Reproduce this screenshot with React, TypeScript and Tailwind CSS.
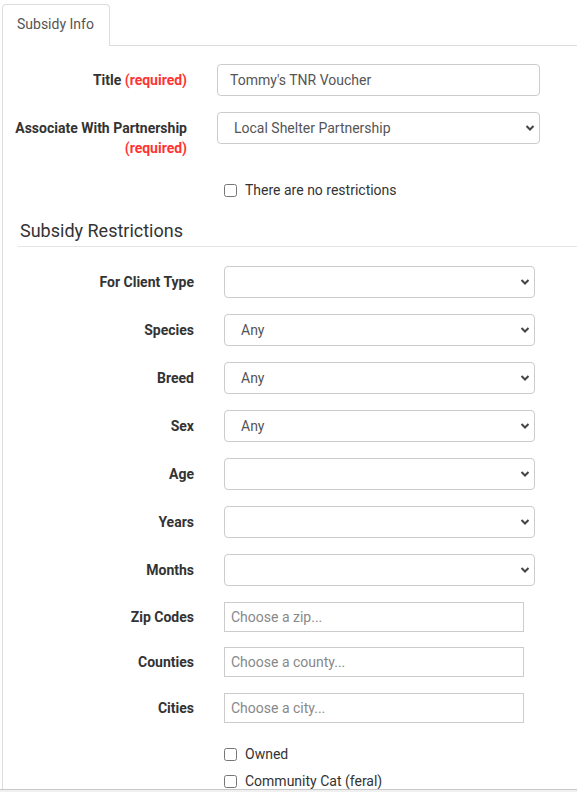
import React from "react";

const FONT = { fontFamily: "Roboto, 'Liberation Sans', sans-serif" };

function Chevron() {
  return (
    <svg width="10" height="7" viewBox="0 0 10 7" className="pointer-events-none absolute right-[5px] top-1/2 -translate-y-1/2">
      <path d="M1.5 1.5l3.5 3.5 3.5-3.5" fill="none" stroke="#444" strokeWidth="2" />
    </svg>
  );
}

function Select({ value, className }: { value?: string; className?: string }) {
  return (
    <div className={`relative h-8 ${className ?? ""}`}>
      <select
        defaultValue={value ?? ""}
        className="h-8 w-full appearance-none rounded border border-[#ccc] bg-white pl-4 pr-6 text-sm text-[#555] outline-none"
      >
        <option value="">{""}</option>
        {value && <option value={value}>{value}</option>}
      </select>
      <Chevron />
    </div>
  );
}

const RESTRICTIONS: { label: string; value?: string }[] = [
  { label: "For Client Type" },
  { label: "Species", value: "Any" },
  { label: "Breed", value: "Any" },
  { label: "Sex", value: "Any" },
  { label: "Age" },
  { label: "Years" },
  { label: "Months" },
];

const CHOSEN = [
  { label: "Zip Codes", placeholder: "Choose a zip...", gap: "mt-4" },
  { label: "Counties", placeholder: "Choose a county...", gap: "mt-[15px]" },
  { label: "Cities", placeholder: "Choose a city...", gap: "mt-4" },
];

function Check({ label, className }: { label: string; className?: string }) {
  return (
    <label className={`flex h-5 items-center pl-[221px] ${className ?? ""}`}>
      <input type="checkbox" className="m-0 h-[13px] w-[13px]" />
      <span className="ml-2 text-sm text-[#333]">{label}</span>
    </label>
  );
}

export default function App() {
  return (
    <div className="h-[792px] w-[577px] overflow-hidden bg-white" style={FONT}>
      <div className="h-[789px] overflow-hidden pl-[2px]">
        {/* tabs */}
        <div className="flex pt-1">
          <div className="h-[42px] w-[108px] rounded-t border border-b-0 border-[#ddd] bg-white pl-[14px] pt-[9px] text-sm leading-5 text-[#555]">
            Subsidy Info
          </div>
          <div className="h-[42px] flex-1 border-b border-[#ddd]" />
        </div>

        <div className="h-full border-l border-[#ddd] pt-[18px]">
          <div className="flex items-start">
            <div className="w-[184px] pt-[6px] text-right text-sm font-bold leading-5 text-[#333]">
              Title <span className="text-[#f33]">(required)</span>
            </div>
            <input
              defaultValue="Tommy's TNR Voucher"
              className="ml-[30px] h-8 w-[323px] rounded border border-[#ccc] px-3 text-sm text-[#555] outline-none"
            />
          </div>

          <div className="mt-4 flex items-start">
            <div className="w-[184px] pt-[6px] text-right text-sm font-bold leading-5 text-[#333]">
              Associate With Partnership
              <br />
              <span className="text-[#f33]">(required)</span>
            </div>
            <Select value="Local Shelter Partnership" className="ml-[30px] w-[323px]" />
          </div>

          <Check label="There are no restrictions" className="mt-[22px]" />

          <h2 className="ml-[15px] mt-[18px] border-b border-[#e5e5e5] pb-[2px] pl-[2px] text-[18px] font-normal leading-[26px] text-[#333]">
            Subsidy Restrictions
          </h2>

          <div className="mt-[19px] flex flex-col gap-4">
            {RESTRICTIONS.map((r) => (
              <div key={r.label} className="flex items-center">
                <div className="w-[191px] text-right text-sm font-bold text-[#333]">{r.label}</div>
                <Select value={r.value} className="ml-[30px] w-[311px]" />
              </div>
            ))}
          </div>

          {CHOSEN.map((c) => (
            <div key={c.label} className={`${c.gap} flex items-center`}>
              <div className="w-[191px] text-right text-sm font-bold text-[#333]">{c.label}</div>
              <input
                placeholder={c.placeholder}
                className="ml-[30px] h-[30px] w-[300px] border border-[#ccc] pl-[6px] text-sm text-[#555] outline-none placeholder:text-[#888]"
              />
            </div>
          ))}

          <Check label="Owned" className="mt-[21px]" />
          <Check label="Community Cat (feral)" className="mt-[7px]" />
        </div>
      </div>
      <div className="h-[3px] border-t border-[#c8c8c8] bg-[#f0f0f0]" />
    </div>
  );
}
